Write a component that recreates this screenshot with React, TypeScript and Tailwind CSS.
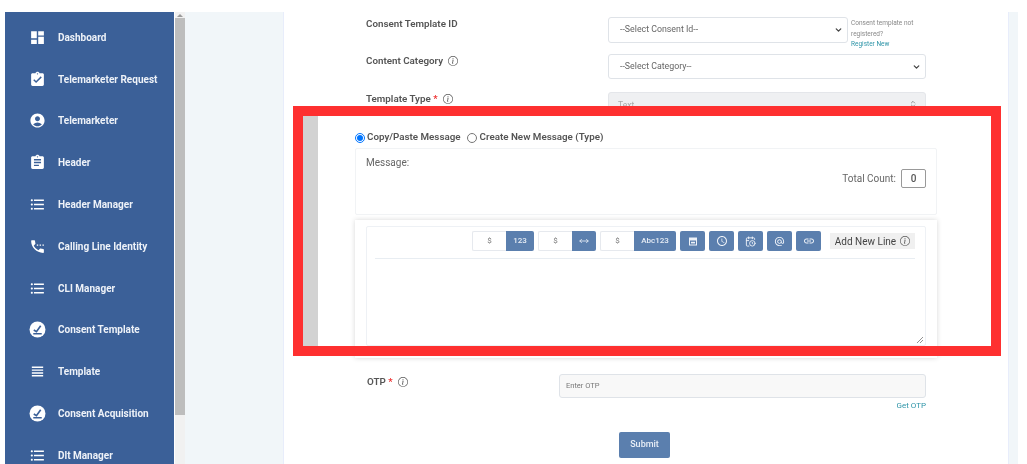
import React from 'react';
import {
  MdDashboard,
  MdAssignmentTurnedIn,
  MdAccountCircle,
  MdAssignment,
  MdFormatListBulleted,
  MdSettingsPhone,
  MdViewHeadline,
  MdAlternateEmail,
  MdLink,
  MdOutlineAccessTime,
} from 'react-icons/md';
import { BsInfoCircle } from 'react-icons/bs';
import { LuCalendarClock, LuMoveHorizontal, LuChevronDown, LuChevronsUpDown } from 'react-icons/lu';

function ConsentIcon({ className }: { className?: string }) {
  return (
    <svg viewBox="0 0 16 16" className={className}>
      <circle cx="8" cy="8" r="7.5" fill="#ffffff" />
      <path d="M4.5 8.5 L7 10 L11 4.5" fill="none" stroke="#3b6098" strokeWidth="1.6" />
      <path d="M4 12 H12" fill="none" stroke="#3b6098" strokeWidth="1.4" />
    </svg>
  );
}

function CalendarIcon() {
  return (
    <svg viewBox="0 0 10 10" className="h-[10px] w-[10px]">
      <path d="M1 1.5 H9 V9.5 H1 Z" fill="#eef2f8" />
      <path d="M2 4.5 H8 V8.5 H2 Z" fill="#5b7fae" />
      <path d="M3 5.8 H7 V7.4 H3 Z" fill="#eef2f8" />
    </svg>
  );
}

const menu = [
  { label: 'Dashboard', Icon: MdDashboard },
  { label: 'Telemarketer Request', Icon: MdAssignmentTurnedIn },
  { label: 'Telemarketer', Icon: MdAccountCircle },
  { label: 'Header', Icon: MdAssignment },
  { label: 'Header Manager', Icon: MdFormatListBulleted },
  { label: 'Calling Line Identity', Icon: MdSettingsPhone },
  { label: 'CLI Manager', Icon: MdFormatListBulleted },
  { label: 'Consent Template', Icon: ConsentIcon },
  { label: 'Template', Icon: MdViewHeadline },
  { label: 'Consent Acquisition', Icon: ConsentIcon },
  { label: 'Dlt Manager', Icon: MdFormatListBulleted },
];

function Sidebar() {
  return (
    <nav className="w-[169px] shrink-0 overflow-hidden bg-[#3b6098] pt-[4.5px]">
      {menu.map(({ label, Icon }) => (
        <div key={label} className="flex h-[41.8px] items-center text-white">
          <div className="flex w-[53px] justify-end pr-[12px]">
            <Icon className="h-[17px] w-[17px] text-white" />
          </div>
          <span className="text-[10px] font-bold text-[#eef2f8]">{label}</span>
        </div>
      ))}
    </nav>
  );
}

function Scrollbar() {
  return (
    <div className="ml-px flex w-[10px] shrink-0 flex-col bg-[#f1f1f1]">
      <div className="flex h-[6px] items-center justify-center">
        <div className="h-0 w-0 border-x-[3px] border-b-[3px] border-x-transparent border-b-[#9a9a9a]" />
      </div>
      <div className="h-[397px] w-full bg-[#bdbdbd]" />
    </div>
  );
}

function Info() {
  return <BsInfoCircle className="h-[10px] w-[10px] text-[#555]" />;
}

function Star() {
  return <span className="text-[#e33]">*</span>;
}

function FieldLabel({ children }: { children: React.ReactNode }) {
  return <div className="flex items-center gap-[5px] text-[9.8px] font-semibold text-[#555]">{children}</div>;
}

function SelectBox({ label, className }: { label: string; className: string }) {
  return (
    <div className={`relative ${className}`}>
      <select
        defaultValue=""
        className="block h-full w-full appearance-none rounded-[3px] border border-[#dfe3e8] bg-white pl-[11px] text-[8.8px] text-[#666]"
      >
        <option value="">{label}</option>
      </select>
      <LuChevronDown className="pointer-events-none absolute top-1/2 right-[5px] h-[9px] w-[9px] -translate-y-1/2 stroke-[3.5] text-[#444]" />
    </div>
  );
}

function SlotGroup({ label, width }: { label: React.ReactNode; width: string }) {
  return (
    <div className="flex h-[20px]">
      <div className="flex w-[34px] items-center justify-center rounded-l-[2px] border border-r-0 border-[#e6e9ee] bg-white text-[8px] text-[#777]">
        $
      </div>
      <div className={`flex ${width} items-center justify-center rounded-r-[2px] bg-[#5b7fae] text-[8px] font-medium text-[#e8eef6]`}>
        {label}
      </div>
    </div>
  );
}

function ToolButton({ children }: { children: React.ReactNode }) {
  return (
    <div className="flex h-[20px] w-[25px] items-center justify-center rounded-[2px] bg-[#5b7fae] text-[#eef2f8]">
      {children}
    </div>
  );
}

function Toolbar() {
  return (
    <div className="mr-[10px] ml-[8px] flex h-[32px] items-start justify-end gap-[4px] border-b border-[#e8edf2] pt-[4px]">
      <SlotGroup label="123" width="w-[28px]" />
      <SlotGroup label={<LuMoveHorizontal className="h-[10px] w-[10px]" />} width="w-[24px]" />
      <SlotGroup label="Abc123" width="w-[42px]" />
      <ToolButton>
        <CalendarIcon />
      </ToolButton>
      <ToolButton>
        <MdOutlineAccessTime className="h-[12px] w-[12px]" />
      </ToolButton>
      <ToolButton>
        <LuCalendarClock className="h-[11px] w-[11px]" />
      </ToolButton>
      <ToolButton>
        <MdAlternateEmail className="h-[11px] w-[11px]" />
      </ToolButton>
      <ToolButton>
        <MdLink className="h-[12px] w-[12px]" />
      </ToolButton>
      <div className="mt-[2px] ml-[5px] flex h-[16px] w-[85px] items-center justify-center gap-[4px] bg-[#f0f0f0] text-[10px] text-[#444]">
        Add New Line
        <Info />
      </div>
    </div>
  );
}

function Form() {
  return (
    <div className="flex w-[582px] flex-col pt-[5px]">
      <div className="flex h-[26px] pl-[11px]">
        <div className="w-[242px]">
          <FieldLabel>Consent Template ID</FieldLabel>
        </div>
        <SelectBox label="--Select Consent Id--" className="h-[26px] w-[240px]" />
        <div className="ml-[3px] w-[72px] pt-px text-[6.5px] leading-[10.5px] text-[#888]">
          Consent template not registered?
          <div className="text-[#2f95a8]">Register New</div>
        </div>
      </div>

      <div className="mt-[11px] flex h-[25px] pl-[11px]">
        <div className="w-[242px]">
          <FieldLabel>
            Content Category
            <Info />
          </FieldLabel>
        </div>
        <SelectBox label="--Select Category--" className="h-[25px] w-[318px]" />
      </div>

      <div className="mt-[13px] flex h-[24px] pl-[11px]">
        <div className="w-[242px]">
          <FieldLabel>
            <span>
              Template Type <Star />
            </span>
            <Info />
          </FieldLabel>
        </div>
        <div className="flex h-[24px] w-[318px] items-start justify-between rounded-[3px] border border-[#e4e6ea] bg-[#eff0f2] pt-[6px] pr-[8px] pl-[9px] text-[8.5px] text-[#aaa]">
          Text
          <LuChevronsUpDown className="mt-px h-[8px] w-[8px] text-[#666]" />
        </div>
      </div>

      <div className="mt-[13px] flex h-[16px] items-center pt-px text-[9.8px] font-semibold text-[#555]">
        <input type="radio" name="mode" defaultChecked className="h-[10px] w-[10px] accent-[#0075ff]" />
        <span className="ml-[2px]">Copy/Paste Message</span>
        <input type="radio" name="mode" className="ml-[6px] h-[10px] w-[10px]" />
        <span className="ml-[3px]">Create New Message (Type)</span>
      </div>

      <div className="mt-[3px] flex h-[67px] justify-between rounded-[2px] border border-[#f1f3f5] pt-[6px] pr-[10px] pl-[10px] text-[10px] text-[#666]">
        <span>Message:</span>
        <div className="mt-[14px] flex h-[19px] items-center gap-[5px]">
          Total Count:
          <div className="flex h-[19px] w-[25px] items-center justify-center rounded-[2px] border border-[#999] font-medium text-[#555]">
            0
          </div>
        </div>
      </div>

      <div className="mt-[5px] h-[138px] bg-white px-[11px] pt-[6px] shadow-[0_0_5px_rgba(0,0,0,0.16)]">
        <div className="relative h-[120px] rounded-[2px] border border-[#eef1f5]">
          <Toolbar />
          <svg viewBox="0 0 8 8" className="absolute right-px bottom-[1px] h-[8px] w-[8px]">
            <path d="M1 7 L7 1 M4 7 L7 4" stroke="#777" strokeWidth="0.8" />
          </svg>
        </div>
      </div>

      <div className="mt-[16px] flex h-[24px] pl-[12px]">
        <div className="w-[192px] pt-px">
          <FieldLabel>
            <span>
              OTP <Star />
            </span>
            <Info />
          </FieldLabel>
        </div>
        <div className="flex h-[24px] w-[367px] items-center rounded-[3px] border border-[#dfe3e8] bg-[#f8f8f8] pl-[6px] text-[7.5px] text-[#777]">
          Enter OTP
        </div>
      </div>
      <div className="mt-[3px] h-[10px] pr-[11px] text-right text-[8px] leading-[10px] text-[#2f95a8]">Get OTP</div>
      <div className="mt-[21px] pl-[264px]">
        <div className="flex h-[26px] w-[51px] items-center justify-center rounded-[2px] bg-[#5b7fae] text-[9px] font-medium text-[#e8eef6]">
          Submit
        </div>
      </div>
    </div>
  );
}

export default function App() {
  return (
    <div className="relative h-[464px] w-[1027px] overflow-hidden bg-white font-['Roboto',sans-serif]">
      <div className="flex h-full pt-3 pl-[5px] blur-[0.35px]">
        <Sidebar />
        <Scrollbar />
        <main className="mr-[9px] flex flex-1 bg-[#f1f6f9] pr-[9px] pl-[98px]">
          <div className="flex-1 border-x border-[#e8edfb] bg-white pl-[71px]">
            <Form />
          </div>
        </main>
      </div>

      {/* annotation drawn over the screenshot */}
      <div className="pointer-events-none absolute top-[106px] left-[293px] h-[250px] w-[708px] border-[10px] border-[#fe3030]">
        <div className="h-full w-[15px] bg-[#d2d2d2]" />
      </div>
    </div>
  );
}
